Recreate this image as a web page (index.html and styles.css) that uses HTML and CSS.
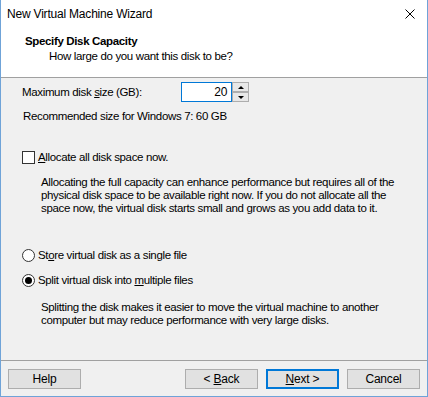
FILE: index.html
```html
<!DOCTYPE html>
<html lang="en">
<head>
    <meta charset="UTF-8">
    <title>New Virtual Machine Wizard</title>
    <link rel="stylesheet" href="styles.css">
</head>
<body>
    <div class="window">
        <div class="titlebar">
            <span class="title">New Virtual Machine Wizard</span>
            <svg class="close" width="10" height="10" viewBox="0 0 10 10">
                <path d="M0.5 0.5 L9.5 9.5 M9.5 0.5 L0.5 9.5" stroke="#000" stroke-width="1" fill="none"/>
            </svg>
        </div>

        <div class="header">
            <h1>Specify Disk Capacity</h1>
            <p>How large do you want this disk to be?</p>
        </div>

        <div class="content">
            <div class="size-row">
                <span>Maximum disk <u>s</u>ize (GB):</span>
                <div class="spin">
                    <div class="spin-input">20</div>
                    <div class="spin-buttons">
                        <div class="spin-btn"><span class="arrow-up"></span></div>
                        <div class="spin-btn"><span class="arrow-down"></span></div>
                    </div>
                </div>
            </div>
            <p class="recommended">Recommended size for Windows 7: 60 GB</p>

            <label class="option check-option">
                <span class="checkbox"></span>
                <span><u>A</u>llocate all disk space now.</span>
            </label>
            <p class="desc">Allocating the full capacity can enhance performance but requires all of the physical disk space to be available right now. If you do not allocate all the space now, the virtual disk starts small and grows as you add data to it.</p>

            <label class="option radio-first">
                <span class="radio"></span>
                <span>St<u>o</u>re virtual disk as a single file</span>
            </label>
            <label class="option radio-second">
                <span class="radio checked"></span>
                <span>Split virtual disk into <u>m</u>ultiple files</span>
            </label>
            <p class="desc desc-split">Splitting the disk makes it easier to move the virtual machine to another computer but may reduce performance with very large disks.</p>
        </div>

        <div class="footer">
            <button class="btn">Help</button>
            <div class="nav-buttons">
                <button class="btn">&lt; <u>B</u>ack</button>
                <button class="btn default"><u>N</u>ext &gt;</button>
                <button class="btn">Cancel</button>
            </div>
        </div>
    </div>
</body>
</html>
```

FILE: styles.css
```css
* {
    box-sizing: border-box;
}

body {
    margin: 0;
    font-family: 'Liberation Sans', Arial, sans-serif;
    font-size: 11.5px;
    letter-spacing: -0.35px;
    color: #000;
    background: #fff;
}

.window {
    width: 428px;
    height: 397px;
    display: flex;
    flex-direction: column;
    border: 1px solid #6fa3d8;
    border-top: none;
    background: #f0f0f0;
}

.titlebar {
    height: 30px;
    background: #fff;
    display: flex;
    align-items: center;
    justify-content: space-between;
    padding: 0 12px 2px 6px;
}

.title {
    font-size: 12px;
    letter-spacing: -0.2px;
}

.close {
    margin-top: -1px;
}

.header {
    height: 48px;
    background: #fff;
    border-bottom: 1px solid #a0a0a0;
    padding: 3px 0 0 24px;
}

.header h1 {
    margin: 0;
    font-size: 11.5px;
    line-height: 16px;
    font-weight: bold;
}

.header p {
    margin: 0 0 0 24px;
    line-height: 14px;
}

.content {
    flex: 1;
    padding: 4px 0 0 21px;
}

.size-row {
    display: flex;
    align-items: center;
    height: 20px;
}

.size-row > span {
    width: 159px;
}

.spin {
    display: flex;
}

.spin-input {
    width: 51px;
    height: 20px;
    border: 1px solid #0078d7;
    background: #fff;
    text-align: right;
    padding: 2px 4px 0 0;
    line-height: 15px;
    font-size: 12px;
}

.spin-buttons {
    display: flex;
    flex-direction: column;
}

.spin-btn {
    width: 17px;
    height: 10px;
    border: 1px solid #adadad;
    background: #e8e8e8;
    display: flex;
    align-items: center;
    justify-content: center;
}

.arrow-up {
    border-left: 3px solid transparent;
    border-right: 3px solid transparent;
    border-bottom: 3px solid #000;
}

.arrow-down {
    border-left: 3px solid transparent;
    border-right: 3px solid transparent;
    border-top: 3px solid #000;
}

.recommended {
    margin: 6px 0 0 1px;
    line-height: 16px;
}

.option {
    display: flex;
    align-items: center;
    gap: 3px;
    height: 16px;
}

.check-option {
    margin-top: 25px;
}

.checkbox {
    width: 13px;
    height: 13px;
    border: 1px solid #333;
    background: #fff;
}

.radio {
    width: 13px;
    height: 13px;
    border: 1px solid #333;
    border-radius: 50%;
    background: #fff;
    display: flex;
    align-items: center;
    justify-content: center;
}

.radio.checked::after {
    content: "";
    width: 7px;
    height: 7px;
    border-radius: 50%;
    background: #000;
}

.desc {
    margin: 11px 0 0 19px;
    width: 372px;
    line-height: 13px;
}

.desc-split {
    margin-top: 13px;
}

.radio-first {
    margin-top: 32px;
}

.radio-second {
    margin-top: 9px;
}

.footer {
    height: 36px;
    border-top: 1px solid #a0a0a0;
    display: flex;
    justify-content: space-between;
    padding: 8px 7px 0 7px;
}

.nav-buttons {
    display: flex;
    gap: 8px;
}

.btn {
    width: 73px;
    height: 20px;
    border: 1px solid #adadad;
    background: #e1e1e1;
    font-family: inherit;
    font-size: 12px;
    letter-spacing: -0.2px;
    color: #000;
    padding: 0;
}

.btn.default {
    border: 2px solid #0078d7;
}
```
